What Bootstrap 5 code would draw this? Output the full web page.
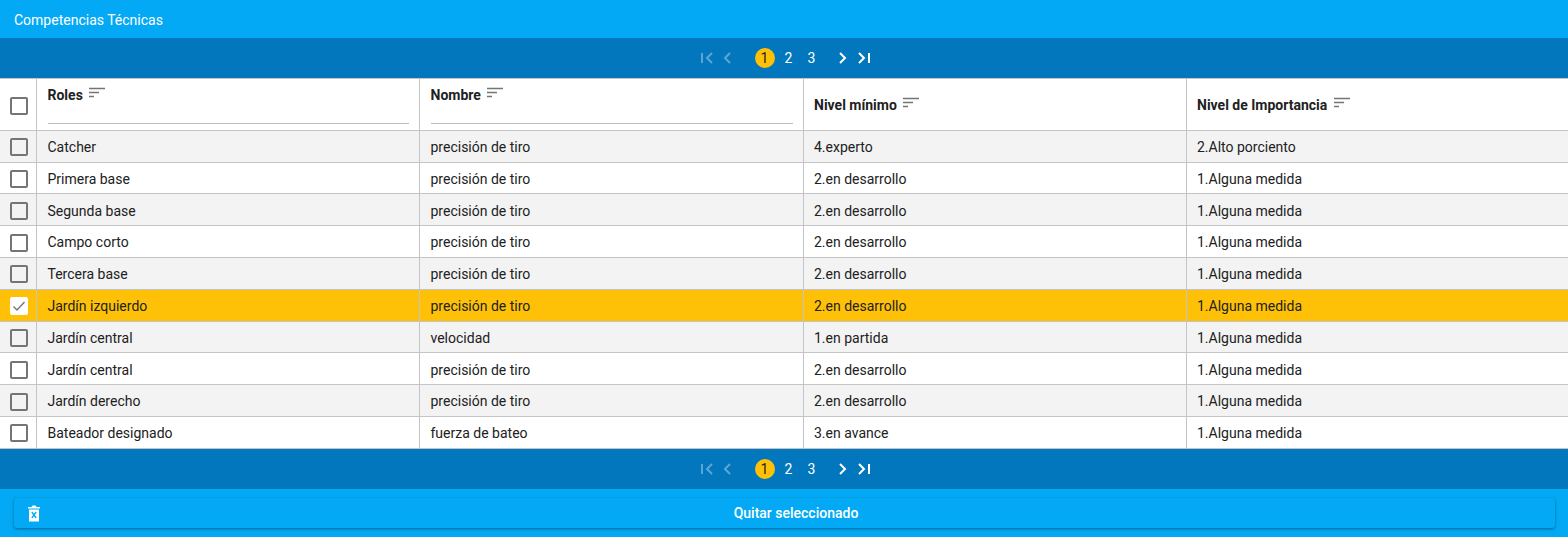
<!DOCTYPE html>
<html lang="es">
<head>
  <meta charset="UTF-8" />
  <title>Competencias Técnicas</title>
  <link href="https://cdn.jsdelivr.net/npm/bootstrap@5.3.0/dist/css/bootstrap.min.css" rel="stylesheet" />
  <style>
    html, body { height: 537px; overflow: hidden; }
    body { font-family: Roboto, "Liberation Sans", sans-serif; font-size: 14px; color: #212121; background: #03a9f4; padding-top: 2px; }
    .title-bar { height: 36px; padding-left: 14px; color: #fff; font-size: 14px; line-height: 36px; background: #03a9f4; }
    .pager-bar { height: 40px; background: #0277bd; color: #fff; padding-left: 2px; }
    .pager-bar svg { display: block; }
    .pg-num { width: 20px; height: 20px; line-height: 20px; text-align: center; border-radius: 50%; font-size: 14px; }
    .pg-num.on { background: #ffc107; color: #212121; }
    .pg-off { opacity: .35; }
    .comp-table { table-layout: fixed; width: 100%; margin: 0; border-collapse: collapse; background: #fff; }
    .comp-table th, .comp-table td { padding: 1.500px 10px 0 11px; border-right: 1px solid #c4c4c4; border-bottom: 1px solid #c4c4c4; vertical-align: middle; background: transparent; box-shadow: none; color: #212121; }
    .comp-table th:nth-child(n+4), .comp-table td:nth-child(n+4) { padding-left: 10.500px; }
    .comp-table th { font-weight: 700; font-size: 14px; height: 51.8px; line-height: 16px; padding-top: 2px; }
    .comp-table thead tr { border-top: 1px solid #c4c4c4; }
    .comp-table td { height: 31.8px; font-size: 14px; line-height: 16px; }
    .comp-table th:last-child, .comp-table td:last-child { border-right: 0; }
    .comp-table .chk-cell { padding: 2px 0 0 10px; }
    .comp-table thead .chk-cell { padding-top: 3px; }
    .comp-table th.col-top { vertical-align: top; padding-top: 8px; }
    .filter-line { height: 1px; background: #bdbdbd; margin-top: 20px; }
    .comp-table tbody tr:nth-child(odd) td { background: #f3f3f3; }
    .comp-table tbody tr.picked td { background: #ffc107; }
    .fake-box { width: 18px; height: 18px; border: 2px solid #757575; border-radius: 2px; background: transparent; display: block; }
    tr.picked .fake-box { border-color: #fff; background: #fff; position: relative; }
    tr.picked .fake-box svg { display: block; margin: -2px; }
    .sort-ico { margin-left: 2px; vertical-align: 1px; }
    .foot-bar { height: 48px; padding: 9px 13px 9px 14px; background: #03a9f4; }
    .quit-btn { height: 30px; width: 100%; padding: 2px 0 0 23px; background: #03a9f4; border: 0; border-radius: 3px; color: #fff; font-size: 14px; font-weight: 500; box-shadow: 0 1px 3px rgba(0,0,0,.4); position: relative; display: flex; align-items: center; justify-content: center; }
    .quit-btn svg { position: absolute; left: 13px; top: 7px; }
  </style>
</head>
<body>
  <div class="title-bar">Competencias Técnicas</div>

  <div class="pager-bar d-flex align-items-center justify-content-center" id="pagerTop"></div>

  <table class="table comp-table">
    <colgroup><col style="width:36px"><col style="width:383px"><col style="width:384px"><col style="width:383px"><col></colgroup>
    <thead>
      <tr>
        <th class="chk-cell"><span class="fake-box"></span></th>
        <th class="col-top">Roles <svg class="sort-ico" width="18" height="12" viewBox="0 0 18 12"><path d="M1 1.5h16M1 5.5h10M1 9.500h5" stroke="#757575" stroke-width="1.400" fill="none"/></svg><div class="filter-line"></div></th>
        <th class="col-top">Nombre <svg class="sort-ico" width="18" height="12" viewBox="0 0 18 12"><path d="M1 1.5h16M1 5.5h10M1 9.500h5" stroke="#757575" stroke-width="1.400" fill="none"/></svg><div class="filter-line"></div></th>
        <th>Nivel mínimo <svg class="sort-ico" width="18" height="12" viewBox="0 0 18 12"><path d="M1 1.5h16M1 5.5h10M1 9.500h5" stroke="#757575" stroke-width="1.400" fill="none"/></svg></th>
        <th>Nivel de Importancia <svg class="sort-ico" width="18" height="12" viewBox="0 0 18 12"><path d="M1 1.5h16M1 5.5h10M1 9.500h5" stroke="#757575" stroke-width="1.400" fill="none"/></svg></th>
      </tr>
    </thead>
    <tbody id="rows"></tbody>
  </table>

  <div class="pager-bar d-flex align-items-center justify-content-center" id="pagerBottom"></div>

  <div class="foot-bar">
    <button class="quit-btn" type="button">
      <svg width="14" height="17" viewBox="0 0 14 17"><path d="M1 2h3.500l1-1.500h3l1 1.500H13v1.500H1z" fill="#fff"/><path fill-rule="evenodd" d="M2 4.500h10V16.500H2zM4.300 7.500l1.800 2.500-1.800 2.500 1 .9L7 11.200l1.700 2.200 1-.9L7.900 10l1.800-2.500-1-.9L7 8.800 5.300 6.600z" fill="#fff"/></svg>
      Quitar seleccionado
    </button>
  </div>

  <script>
    const data = [
      ["Catcher", "precisión de tiro", "4.experto", "2.Alto porciento"],
      ["Primera base", "precisión de tiro", "2.en desarrollo", "1.Alguna medida"],
      ["Segunda base", "precisión de tiro", "2.en desarrollo", "1.Alguna medida"],
      ["Campo corto", "precisión de tiro", "2.en desarrollo", "1.Alguna medida"],
      ["Tercera base", "precisión de tiro", "2.en desarrollo", "1.Alguna medida"],
      ["Jardín izquierdo", "precisión de tiro", "2.en desarrollo", "1.Alguna medida"],
      ["Jardín central", "velocidad", "1.en partida", "1.Alguna medida"],
      ["Jardín central", "precisión de tiro", "2.en desarrollo", "1.Alguna medida"],
      ["Jardín derecho", "precisión de tiro", "2.en desarrollo", "1.Alguna medida"],
      ["Bateador designado", "fuerza de bateo", "3.en avance", "1.Alguna medida"]
    ];
    const check = '<svg width="18" height="18" viewBox="0 0 18 18"><path d="M3.500 9.500l3.500 3.500 7.500-8" stroke="#757575" stroke-width="1.400" fill="none"/></svg>';
    document.getElementById("rows").innerHTML = data.map((r, i) => `<tr class="${i === 5 ? "picked" : ""}">
      <td class="chk-cell"><span class="fake-box">${i === 5 ? check : ""}</span></td>
      ${r.map(c => `<td>${c}</td>`).join("")}
    </tr>`).join("");

    const pagerHtml = `
      <svg class="pg-off" width="14" height="14" viewBox="0 0 14 14" style="margin-right:8px"><path d="M2 2v10M12 2L7 7l5 5" stroke="#fff" stroke-width="2" fill="none"/></svg>
      <svg class="pg-off" width="10" height="14" viewBox="0 0 10 14" style="margin-right:23px"><path d="M8 2L3 7l5 5" stroke="#fff" stroke-width="2" fill="none"/></svg>
      <div class="pg-num on">1</div><div class="pg-num" style="margin-left:4px">2</div><div class="pg-num" style="margin-left:3px">3</div>
      <svg width="10" height="14" viewBox="0 0 10 14" style="margin-left:16px"><path d="M2 2l5 5-5 5" stroke="#fff" stroke-width="2" fill="none"/></svg>
      <svg width="14" height="14" viewBox="0 0 14 14" style="margin-left:9px"><path d="M2 2l5 5-5 5M12 2v10" stroke="#fff" stroke-width="2" fill="none"/></svg>`;
    document.getElementById("pagerTop").innerHTML = pagerHtml;
    document.getElementById("pagerBottom").innerHTML = pagerHtml;
  </script>
  <script src="https://cdn.jsdelivr.net/npm/bootstrap@5.3.0/dist/js/bootstrap.bundle.min.js"></script>
</body>
</html>
